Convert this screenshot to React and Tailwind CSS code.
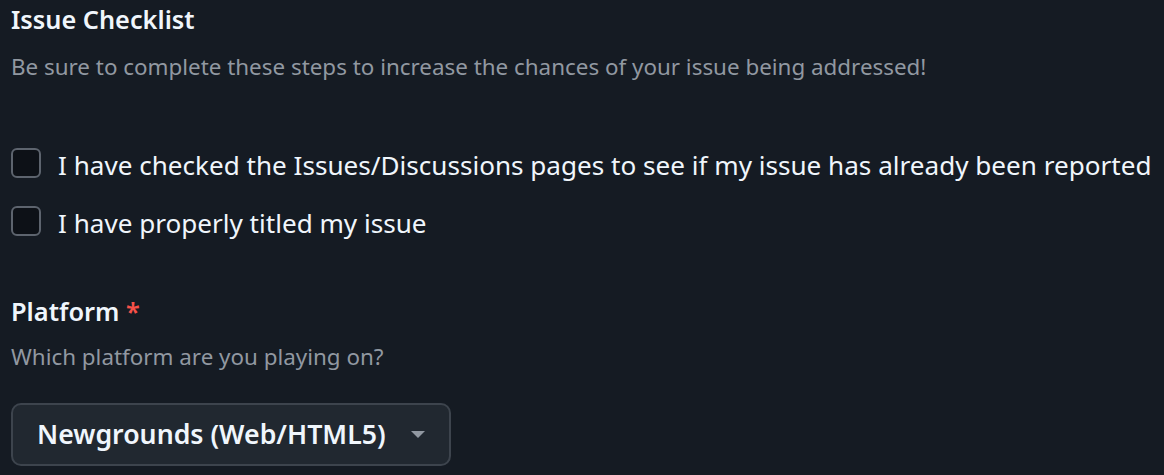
export default function App() {
  const font = { fontFamily: '"Noto Sans", "Open Sans", sans-serif' };
  return (
    <div className="min-h-screen w-full bg-[#151b23] px-[11px] pt-px text-[#f0f6fc]" style={font}>
      <h3 className="text-[25.3px] font-semibold leading-[36px]">Issue Checklist</h3>
      <p className="mt-[14px] text-[22.4px] leading-[32px] text-[#9198a1]">
        Be sure to complete these steps to increase the chances of your issue being addressed!
      </p>
      <div className="mt-[65px] flex flex-col gap-[28px]">
        {[
          'I have checked the Issues/Discussions pages to see if my issue has already been reported',
          'I have properly titled my issue',
        ].map((t) => (
          <label key={t} className="flex h-[30px] items-center gap-[17px]">
            <span className="h-[30px] w-[30px] shrink-0 rounded-[6px] border-2 border-[#5d646e] bg-[#0d1117]" />
            <span className="whitespace-nowrap pt-[3px] text-[26.1px] leading-[30px]">{t}</span>
          </label>
        ))}
      </div>
      <div className="mt-[57px] text-[25.4px] font-semibold leading-[36px]">
        Platform <span className="text-[#f85149]">*</span>
      </div>
      <p className="mt-[12px] text-[22.4px] leading-[32px] text-[#9198a1]">Which platform are you playing on?</p>
      <div className="mt-[30px] flex h-[63px] w-[440px] items-center rounded-[10px] border-2 border-[#3d444d] bg-[#212830] pl-[24px] pr-[24px]">
        <span className="text-[26.7px] font-semibold">Newgrounds (Web/HTML5)</span>
        <svg className="ml-auto" width="14" height="8" viewBox="0 0 14 8">
          <path d="M0 0 L14 0 L7 7 Z" fill="#9198a1" />
        </svg>
      </div>
    </div>
  );
}
